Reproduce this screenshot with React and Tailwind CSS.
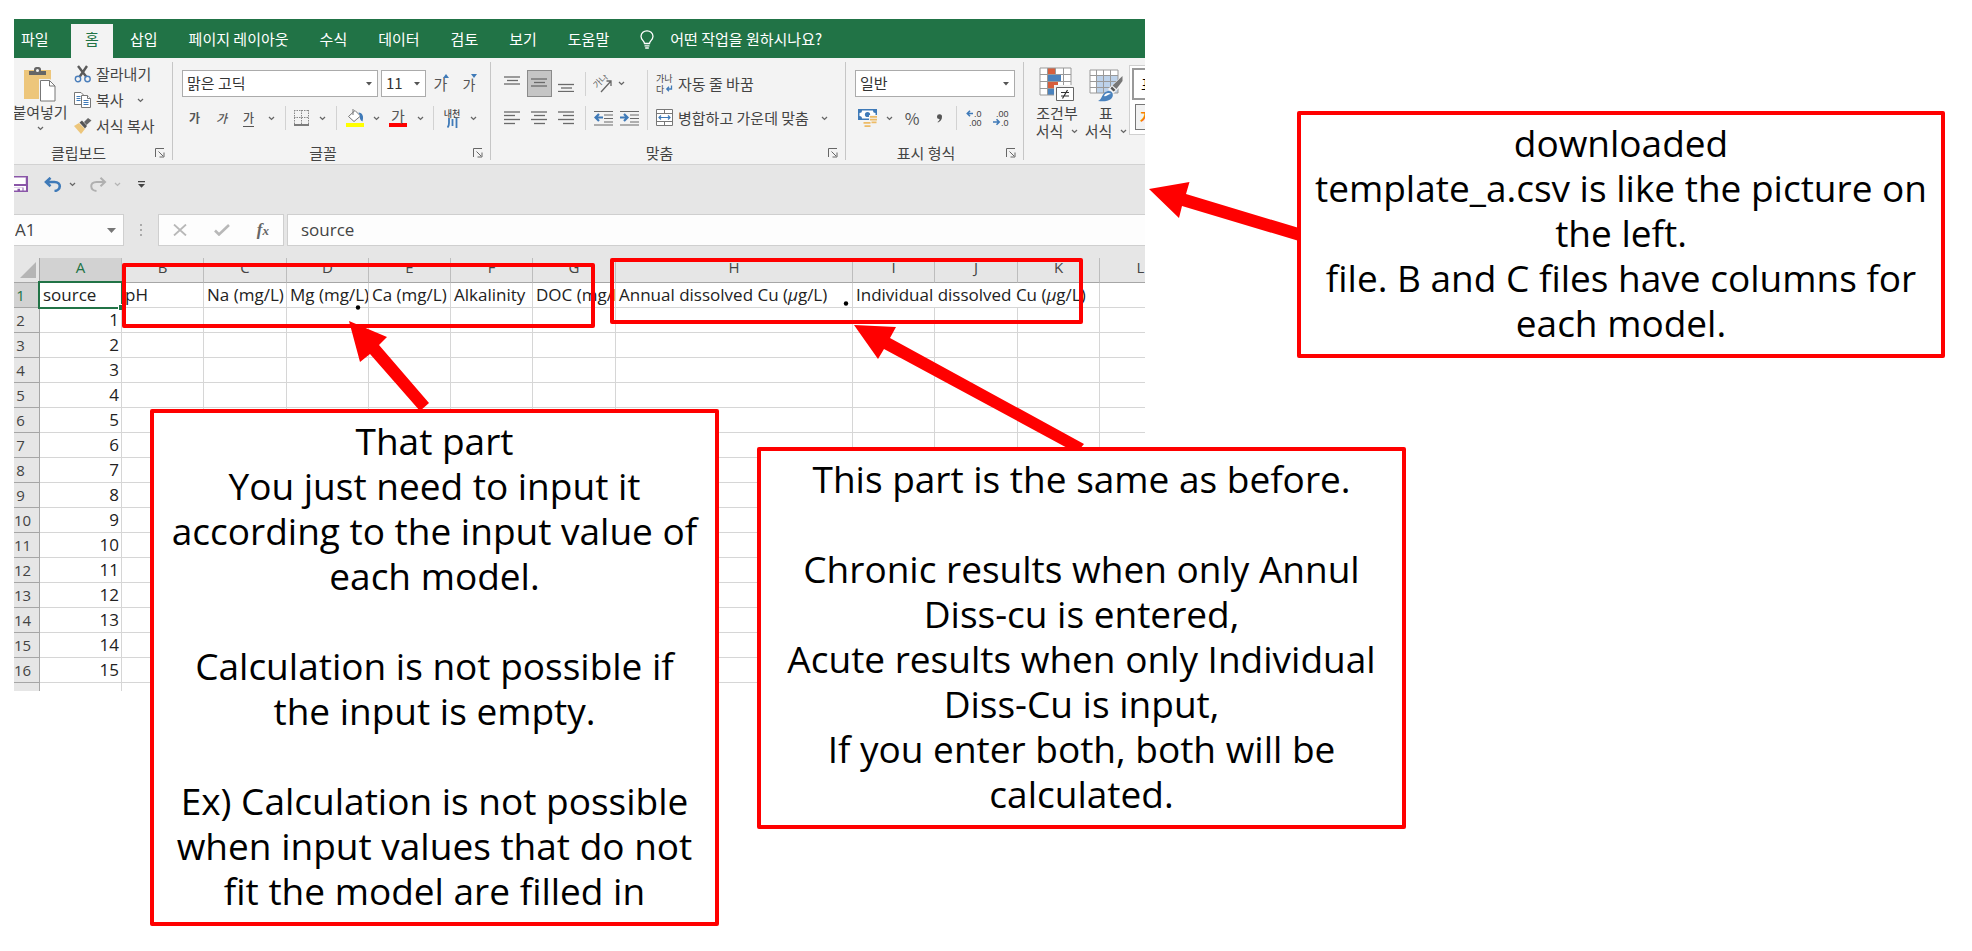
import React from "react";

const UI = "font-['Noto_Sans_CJK_KR','Noto_Sans',sans-serif]";
const LATIN = "font-['Open_Sans','Noto_Sans_CJK_KR',sans-serif]";

/* ---------- small pieces ---------- */

function Chevron({ color = "#666" }) {
  return (
    <svg width="7" height="5" viewBox="0 0 7 5" fill="none" stroke={color} strokeWidth="1.3" aria-hidden="true">
      <path d="M1 1l2.5 2.4L6 1" />
    </svg>
  );
}

function IconButton({ label, width, children, className = "" }) {
  return (
    <button type="button" aria-label={label} className={`flex h-6 shrink-0 items-center justify-center ${width} ${className}`}>
      {children}
    </button>
  );
}

function Divider() {
  return <span className="mx-[5px] h-6 w-px shrink-0 bg-[#d2d2d2]" />;
}

function Launcher({ label }) {
  return (
    <button type="button" aria-label={label} className="flex w-[17px] shrink-0 items-center">
      <svg width="10" height="10" viewBox="0 0 10 10" fill="none" stroke="#666" aria-hidden="true">
        <path d="M.5 9V.5H9M3.5 3.5L8 8M9 4.500V9H4.500" />
      </svg>
    </button>
  );
}

function Group({ title, className = "", children }) {
  return (
    <div className="flex shrink-0 items-stretch">
      <div className={`flex flex-col ${className}`}>
        <div className="h-[85px]">{children}</div>
        {title && (
          <div className="flex h-5 items-center">
            <span className="flex-1 text-center">{title}</span>
            <Launcher label={`${title} 설정`} />
          </div>
        )}
      </div>
      <span className="my-1 w-px bg-[#c6c6c6]" />
    </div>
  );
}

function Combo({ label, value, width }) {
  return (
    <div className={`flex h-[27px] shrink-0 items-center border border-[#ababab] bg-white pr-[5px] ${width}`}>
      <select aria-label={label} defaultValue={value} className="h-full min-w-0 flex-1 appearance-none bg-transparent pb-px pl-1 text-[#333] outline-none">
        <option>{value}</option>
      </select>
      <svg width="6" height="4" viewBox="0 0 6 4" fill="#555" className="pointer-events-none shrink-0" aria-hidden="true">
        <path d="M0 0h6L3 3.600z" />
      </svg>
    </div>
  );
}

function Lines({ rows }) {
  return (
    <svg width="17" height="16" viewBox="0 0 17 16" stroke="#6a6a6a" strokeWidth="1.3" aria-hidden="true">
      {rows.map(([x1, x2, y]) => (
        <path key={y} d={`M${x1} ${y}H${x2}`} />
      ))}
    </svg>
  );
}

/* ---------- ribbon ---------- */

const tabs = ["삽입", "페이지 레이아웃", "수식", "데이터", "검토", "보기", "도움말"];

function TabBar() {
  return (
    <nav className="flex h-[39px] items-end bg-[#217346] text-[15px] text-white">
      <button type="button" className="h-[34px] w-[57px] pb-[3px] pl-[7px] text-left">파일</button>
      <button type="button" className="h-[34px] w-[42px] bg-[#f3f3f3] pb-[3px] text-[#217346]">홈</button>
      <div className="flex gap-px pl-[2px]">
        {tabs.map((t) => (
          <button key={t} type="button" className="h-[34px] px-[15px] pb-[3px] whitespace-nowrap">{t}</button>
        ))}
      </div>
      <button type="button" className="flex h-[34px] items-center gap-4 pb-[3px] pl-[16px] whitespace-nowrap">
        <svg width="14" height="19" viewBox="0 0 14 19" fill="none" stroke="#fff" strokeWidth="1.3" aria-hidden="true">
          <path d="M4.500 13.500c0-2.500-3.500-3.500-3.500-7.200A5.900 5.900 0 0 1 7 .8a5.900 5.900 0 0 1 6 5.500c0 3.700-3.500 4.700-3.500 7.200zM4.500 15.800h5M5.200 18h3.600" />
        </svg>
        어떤 작업을 원하시나요?
      </button>
    </nav>
  );
}

function ClipboardGroup() {
  return (
    <Group title="클립보드" className="w-[170px]">
      <div className="flex">
        <button type="button" className="ml-3 flex w-[52px] shrink-0 flex-col items-center pt-[9px] whitespace-nowrap">
          <svg width="34" height="35" viewBox="0 0 34 35" aria-hidden="true">
            <rect x="1" y="3" width="27" height="29" fill="#edc67b" />
            <path d="M6 8V4h5V2.500A2.500 2.500 0 0 1 13.500 0h2A2.500 2.500 0 0 1 18 2.500V4h5v4z" fill="#666" />
            <circle cx="14.500" cy="3.500" r="1.500" fill="#f3f3f3" />
            <path d="M16 12h11l6 6v17H16z" fill="#f3f3f3" />
            <path d="M17.500 13.500h9l5.500 5.500v15H17.500z" fill="#fff" stroke="#777" />
            <path d="M26.500 13.500V19H32" fill="none" stroke="#777" />
          </svg>
          <span className="leading-5">붙여넣기</span>
          <span className="mt-1"><Chevron /></span>
        </button>
        <div className="flex flex-col pt-[3px] pl-2">
          <button type="button" className="flex h-[26px] items-center gap-1 whitespace-nowrap">
            <svg width="18" height="18" viewBox="0 0 18 18" fill="none" aria-hidden="true">
              <path d="M4 1l8.500 11M13 1L5.500 12" stroke="#5a5a5a" strokeWidth="2.400" />
              <circle cx="4" cy="14" r="2.700" stroke="#4a7ebb" strokeWidth="1.400" />
              <circle cx="13.500" cy="14" r="2.700" stroke="#4a7ebb" strokeWidth="1.400" />
            </svg>
            잘라내기
          </button>
          <button type="button" className="flex h-[26px] items-center gap-1 whitespace-nowrap">
            <svg width="18" height="16" viewBox="0 0 18 16" fill="#fff" stroke="#777" aria-hidden="true">
              <path d="M.5.500H7L10 3.500v9H.5z" />
              <path d="M2.500 4.500h4M2.500 6.500h4M2.500 8.500h4" stroke="#3f7ab8" />
              <path d="M7.500 3.500h6l3 3v9h-9z" />
              <path d="M13.500 3.500v3h3" />
              <path d="M9.500 8.500h5M9.500 10.500h5M9.500 12.500h5" stroke="#3f7ab8" />
            </svg>
            복사
            <span className="ml-[9px]"><Chevron /></span>
          </button>
          <button type="button" className="flex h-[26px] items-center gap-1 whitespace-nowrap">
            <svg width="18" height="17" viewBox="0 0 18 17" aria-hidden="true">
              <path d="M0 8l5-3 6 6-4 5z" fill="#edc67b" />
              <path d="M5.500 4.500L8 2.500 13 8l-2 2.500z" fill="#555" />
              <path d="M10 4l4-4 3.500 2.500L12.500 7z" fill="#666" />
            </svg>
            서식 복사
          </button>
        </div>
      </div>
    </Group>
  );
}

function FontGroup() {
  return (
    <Group title="글꼴" className="w-[317px]">
      <div className="flex flex-col gap-[9px] pt-3 pl-2">
        <div className="flex items-center pl-px">
          <Combo label="글꼴 이름" value="맑은 고딕" width="w-[196px]" />
          <span className="w-[3px]" />
          <Combo label="글꼴 크기" value="11" width="w-[45px]" />
          <IconButton label="글꼴 크게" width="w-[31px]">
            <span className="flex items-end text-[15px] leading-6 text-[#555]">
              가
              <svg width="6" height="4" viewBox="0 0 6 4" fill="#3f7ab8" className="-ml-1 mb-[18px]" aria-hidden="true"><path d="M0 4L3 0l3 4z" /></svg>
            </span>
          </IconButton>
          <IconButton label="글꼴 작게" width="w-[26px]">
            <span className="flex items-end text-sm leading-6 text-[#555]">
              가
              <svg width="6" height="4" viewBox="0 0 6 4" fill="#3f7ab8" className="-ml-1 mb-[18px]" aria-hidden="true"><path d="M0 0h6L3 4z" /></svg>
            </span>
          </IconButton>
        </div>
        <div className="flex items-center text-[#555]">
          <IconButton label="굵게" width="w-[27px]" className="text-xs font-bold">가</IconButton>
          <IconButton label="기울임꼴" width="w-[27px]" className="text-xs font-medium italic">가</IconButton>
          <IconButton label="밑줄" width="w-[27px]">
            <span className="border-b border-[#555] text-xs leading-4 font-medium">가</span>
          </IconButton>
          <IconButton label="밑줄 옵션" width="w-[18px]"><Chevron /></IconButton>
          <Divider />
          <IconButton label="테두리" width="w-[22px]">
            <svg width="16" height="16" viewBox="0 0 16 16" fill="none" stroke="#888" aria-hidden="true">
              <path d="M.5 0v14M14.500 0v14M7.500 0v14M0 .5h15M0 7.500h15" strokeDasharray="1.500 1" />
              <path d="M0 15h15" stroke="#555" strokeWidth="1.500" />
            </svg>
          </IconButton>
          <IconButton label="테두리 옵션" width="w-[18px]"><Chevron /></IconButton>
          <Divider />
          <IconButton label="채우기 색" width="w-[26px]">
            <svg width="18" height="18" viewBox="0 0 18 18" fill="none" aria-hidden="true">
              <path d="M2.500 7.500L9 1.500l5.500 5.500L8 12.500z" fill="#fff" stroke="#777" />
              <path d="M7 0v6" stroke="#777" />
              <path d="M12.500 3.500c4 .5 5.500 3.500 4 9-2.500-1-3-3.500-2.500-6z" fill="#3f7ab8" />
              <rect y="14" width="18" height="4" fill="#ff0" />
            </svg>
          </IconButton>
          <IconButton label="채우기 색 옵션" width="w-[16px]"><Chevron /></IconButton>
          <IconButton label="글꼴 색" width="w-[28px]">
            <span className="border-b-4 border-[#f00] px-[2px] text-[15px] leading-[14px]">가</span>
          </IconButton>
          <IconButton label="글꼴 색 옵션" width="w-[16px]"><Chevron /></IconButton>
          <Divider />
          <IconButton label="윗주 필드" width="w-[26px]">
            <span className="flex flex-col items-center text-[9px] leading-[9px] font-medium text-[#444]">
              내천
              <svg width="11" height="10" viewBox="0 0 11 10" fill="none" stroke="#3f7ab8" strokeWidth="1.800" aria-hidden="true">
                <path d="M2 0v5q0 3-1.500 4.500M5.500 1v7M9.500 0v10" />
              </svg>
            </span>
          </IconButton>
          <IconButton label="윗주 옵션" width="w-[16px]"><Chevron /></IconButton>
        </div>
      </div>
    </Group>
  );
}

function AlignGroup() {
  return (
    <Group title="맞춤" className="w-[354px]">
      <div className="flex pt-3 pl-2">
        <div className="flex w-[148px] flex-col gap-[9px]">
          <div className="flex h-[27px] items-center">
            <IconButton label="위쪽 맞춤" width="w-[27px]"><Lines rows={[[0, 16, 1], [3, 14, 4.500], [0, 16, 8]]} /></IconButton>
            <button type="button" aria-label="가운데 맞춤" aria-pressed="true" className="mx-px flex h-[27px] w-[25px] items-center justify-center border border-[#8a8a8a] bg-[#c5c5c5]">
              <Lines rows={[[0, 16, 3], [3, 14, 6.500], [0, 16, 10]]} />
            </button>
            <IconButton label="아래쪽 맞춤" width="w-[27px]"><Lines rows={[[0, 16, 8.500], [3, 14, 12], [0, 16, 15.500]]} /></IconButton>
            <Divider />
            <IconButton label="방향" width="w-[24px]">
              <svg width="20" height="18" viewBox="0 0 20 18" fill="none" stroke="#666" aria-hidden="true">
                <text x="0" y="0" transform="translate(4 14) rotate(-45)" fontSize="9" fill="#666" stroke="none">가나</text>
                <path d="M8 17L18 6M13.500 6H18v5" strokeWidth="1.300" />
              </svg>
            </IconButton>
            <IconButton label="방향 옵션" width="w-[12px]"><Chevron /></IconButton>
          </div>
          <div className="flex items-center">
            <IconButton label="왼쪽 맞춤" width="w-[27px]"><Lines rows={[[0, 16, 2], [0, 11, 5.500], [0, 16, 9.500], [0, 11, 13.500]]} /></IconButton>
            <IconButton label="가운데" width="w-[27px]"><Lines rows={[[0, 16, 2], [3, 14, 5.500], [0, 16, 9.500], [3, 14, 13.500]]} /></IconButton>
            <IconButton label="오른쪽 맞춤" width="w-[27px]"><Lines rows={[[0, 16, 2], [5, 16, 5.500], [0, 16, 9.500], [5, 16, 13.500]]} /></IconButton>
            <Divider />
            <IconButton label="내어쓰기" width="w-[24px]">
              <svg width="19" height="16" viewBox="0 0 19 16" fill="none" stroke="#6a6a6a" strokeWidth="1.200" aria-hidden="true">
                <path d="M0 1.500h19M10 5h9M10 8.500h9M10 12h9M0 15h19" />
                <path d="M9 7.500H2M5 4L1.500 7.500 5 11" stroke="#3f7ab8" strokeWidth="2.200" />
              </svg>
            </IconButton>
            <IconButton label="들여쓰기" width="w-[28px]">
              <svg width="19" height="16" viewBox="0 0 19 16" fill="none" stroke="#6a6a6a" strokeWidth="1.200" aria-hidden="true">
                <path d="M0 1.500h19M10 5h9M10 8.500h9M10 12h9M0 15h19" />
                <path d="M0 7.500h7M4 4l3.500 3.500L4 11" stroke="#3f7ab8" strokeWidth="2.200" />
              </svg>
            </IconButton>
          </div>
        </div>
        <span className="w-px bg-[#d2d2d2]" />
        <div className="flex flex-col gap-[9px] pl-2">
          <button type="button" className="flex h-[27px] items-center gap-1 whitespace-nowrap">
            <svg width="18" height="20" viewBox="0 0 18 20" fill="none" aria-hidden="true">
              <text x="0" y="8" fontSize="9" fill="#444">가나</text>
              <text x="0" y="18.500" fontSize="9" fill="#444">다</text>
              <path d="M15.500 11.500V15H11M13 12.800L10.800 15l2.200 2.200" stroke="#3f7ab8" strokeWidth="1.300" />
            </svg>
            자동 줄 바꿈
          </button>
          <button type="button" className="flex h-6 items-center gap-1 whitespace-nowrap">
            <svg width="18" height="18" viewBox="0 0 18 18" fill="#fff" stroke="#777" aria-hidden="true">
              <path d="M.5.500h16v16H.5zM.5 4.500h16M.5 12.500h16M8.500.500v4M8.500 12.500v4" />
              <path d="M3 8.500h11M5 6.500l-2 2 2 2M12 6.500l2 2-2 2" fill="none" stroke="#3f7ab8" strokeWidth="1.200" />
            </svg>
            병합하고 가운데 맞춤
            <span className="ml-2"><Chevron /></span>
          </button>
        </div>
      </div>
    </Group>
  );
}

function NumberGroup() {
  return (
    <Group title="표시 형식" className="w-[177px]">
      <div className="flex flex-col gap-[9px] pt-3 pl-[9px]">
        <Combo label="표시 형식 선택" value="일반" width="w-[160px]" />
        <div className="flex items-center text-[#555]">
          <IconButton label="회계 표시 형식" width="w-[26px]">
            <svg width="20" height="19" viewBox="0 0 20 19" aria-hidden="true">
              <path d="M0 0h19v11H0z" fill="#3f7ab8" />
              <path d="M1.500 4A2.500 2.500 0 0 0 4 1.500h11A2.500 2.500 0 0 0 17.500 4v3A2.500 2.500 0 0 0 15 9.500H4A2.500 2.500 0 0 0 1.500 7z" fill="#fff" />
              <circle cx="9.500" cy="5.500" r="2.600" fill="#3f7ab8" />
              <path d="M11 6h9v9h-6v4H4v-7h7z" fill="#f3f3f3" />
              <path d="M12 7h7v1.800h-7zM12 9.800h7v1.800h-7zM5.500 13h7v1.800h-7zM13.500 12.600h5v1.600h-5zM6.500 16.200h6V18h-6z" fill="#edbb66" />
            </svg>
          </IconButton>
          <IconButton label="회계 옵션" width="w-[16px]"><Chevron /></IconButton>
          <IconButton label="백분율" width="w-[30px]" className="text-base">%</IconButton>
          <IconButton label="쉼표 스타일" width="w-[24px]">
            <svg width="7" height="9" viewBox="0 0 7 9" fill="#555" aria-hidden="true"><path d="M1 2.500a2.500 2.500 0 0 1 5 .3C6 5.500 4.500 7.500 2 8.500L1.500 8C3 7 3.600 6 3.500 5A2.400 2.400 0 0 1 1 2.500z" /></svg>
          </IconButton>
          <Divider />
          <IconButton label="자릿수 늘림" width="w-[26px]">
            <svg width="18" height="18" viewBox="0 0 18 18" fill="none" className="font-['Liberation_Sans',sans-serif]" aria-hidden="true">
              <text x="8" y="8" fontSize="9" fill="#444">.0</text>
              <text x="3" y="17" fontSize="9" fill="#444">.00</text>
              <path d="M7 4.500H1.500M4 1.800L1.300 4.500 4 7.200" stroke="#3f7ab8" strokeWidth="1.600" />
            </svg>
          </IconButton>
          <IconButton label="자릿수 줄임" width="w-[28px]">
            <svg width="18" height="18" viewBox="0 0 18 18" fill="none" className="font-['Liberation_Sans',sans-serif]" aria-hidden="true">
              <text x="3" y="8" fontSize="9" fill="#444">.00</text>
              <text x="8" y="17" fontSize="9" fill="#444">.0</text>
              <path d="M0 13h6M3.500 10.300L6.200 13l-2.700 2.700" stroke="#3f7ab8" strokeWidth="1.600" />
            </svg>
          </IconButton>
        </div>
      </div>
    </Group>
  );
}

function StylesGroup() {
  return (
    <div className="flex shrink-0 pl-[7px]">
      <button type="button" className="flex w-[52px] flex-col items-center pt-[9px] leading-[18px] whitespace-nowrap">
        <svg width="36" height="35" viewBox="0 0 36 35" aria-hidden="true">
          <path d="M1 1h31v27H1z" fill="#fff" />
          <path d="M9 1h8v6H9zM9 15h10v6H9z" fill="#d65f3d" />
          <path d="M9 8h13v6H9zM9 22h6v6H9z" fill="#4a82bd" />
          <path d="M1 1h31v27H1zM8.500 1v27M24.500 1v27M1 7.500h31M1 14.500h31M1 21.500h31M16.500 1v6.500" fill="none" stroke="#999" />
          <path d="M15 18h21v17H15z" fill="#f3f3f3" />
          <path d="M17.500 20.500h17v13h-17z" fill="#fff" stroke="#666" />
          <path d="M22 25.500h8M22 29h8M28.500 23l-5 8.500" stroke="#333" strokeWidth="1.200" />
        </svg>
        <span className="mt-[2px]">조건부</span>
        <span className="flex items-center gap-2">서식<Chevron /></span>
      </button>
      <button type="button" className="flex w-[46px] flex-col items-center pt-[9px] leading-[18px] whitespace-nowrap">
        <svg width="34" height="35" viewBox="0 0 34 35" aria-hidden="true">
          <path d="M1 3h28v23H1z" fill="#fff" />
          <path d="M8 9h21v17H8z" fill="#bdd2ea" />
          <path d="M1 3h28v23H1zM7.500 3v23M14.500 3v23M21.500 3v23M1 8.500h28M1 14.500h28M1 20.500h28" fill="none" stroke="#999" />
          <path d="M34 8v9L24 27l-5-5z" fill="#f3f3f3" />
          <path d="M33.500 9v5l-6 8-4-3.500z" fill="#777" />
          <path d="M23 19.500l3.500 3.500-2 1.500-3-3z" fill="#555" />
          <path d="M9 34c4-1 4-9 10-10 5-.5 6.500 5 3 8-3 2.500-8 2.500-13 2z" fill="#4a82bd" />
          <path d="M15 29c1-3 5-4 7-2-3 0-4 3-7 2z" fill="#fff" />
        </svg>
        <span className="mt-[2px]">표</span>
        <span className="flex items-center gap-2">서식<Chevron /></span>
      </button>
      <div className="mt-[7px] flex h-[70px] w-[90px] shrink-0 flex-col gap-1 border border-[#d0d0d0] bg-white p-[2px]">
        <button type="button" className="h-8 w-full border-2 border-[#999] pl-[7px] text-left text-black">표준</button>
        <button type="button" className="ml-[3px] h-[26px] border border-[#777] bg-[#f2f2f2] pl-1 text-left font-bold text-[#fa7d00]">계산</button>
      </div>
    </div>
  );
}

function Ribbon() {
  return (
    <div className="flex h-[107px] overflow-hidden border-b border-[#d2d2d2] bg-[#f3f3f3] text-[15px] leading-5 text-[#444]">
      <div className="-ml-3 flex">
        <ClipboardGroup />
        <FontGroup />
        <AlignGroup />
        <NumberGroup />
        <StylesGroup />
      </div>
    </div>
  );
}

function QuickAccess() {
  return (
    <div className="flex h-[38px] items-center">
      <button type="button" aria-label="저장" className="flex w-[30px]">
        <svg width="14" height="16" viewBox="0 0 14 16" fill="none" aria-hidden="true">
          <path d="M0 0h14v16H0z" fill="#8a56a8" />
          <path d="M0 1.500h12v6.500H0zM0 10h12v4.500H9.500V11.500H0z" fill="#fff" />
          <path d="M0 11.500h8.500v3H6V12.800H3.500v1.700H0z" fill="#fff" />
          <path d="M11 1.500h1V8h-1z" fill="#8a56a8" opacity=".25" />
        </svg>
      </button>
      <button type="button" aria-label="실행 취소" className="flex w-[22px]">
        <svg width="18" height="15" viewBox="0 0 18 15" fill="none" stroke="#3f7ab8" strokeWidth="2.600" aria-hidden="true">
          <path d="M6.500.800L2 5l4.500 4.200M2 5h8.500c7.500 0 6.500 8.500 0 9" />
        </svg>
      </button>
      <span className="w-[23px] pl-[3px]"><Chevron /></span>
      <button type="button" aria-label="다시 실행" className="flex w-[22px]">
        <svg width="18" height="15" viewBox="0 0 18 15" fill="none" stroke="#b0b0b0" strokeWidth="2" aria-hidden="true">
          <path d="M11.500.800L16 5l-4.500 4.200M16 5H7.500C0 5 1 13.500 7.500 14" />
        </svg>
      </button>
      <span className="w-[27px] pl-[3px]"><Chevron color="#b5b5b5" /></span>
      <button type="button" aria-label="빠른 실행 도구 모음 사용자 지정">
        <svg width="7" height="7" viewBox="0 0 7 7" fill="#444" aria-hidden="true"><path d="M0 0h7v1.200H0zM0 3h7L3.500 6.800z" /></svg>
      </button>
    </div>
  );
}

function FormulaBar() {
  return (
    <div className={`flex h-8 text-[17px] text-[#444] ${LATIN}`}>
      <div className="flex w-[110px] shrink-0 items-center border-y border-r border-[#cfcfcf] bg-[#fdfdfd] pr-[7px]">
        <input aria-label="이름 상자" defaultValue="A1" className="min-w-0 flex-1 bg-transparent pl-px outline-none" />
        <svg width="9" height="5" viewBox="0 0 9 5" fill="#777" aria-hidden="true"><path d="M0 0h9L4.500 5z" /></svg>
      </div>
      <div className="flex w-[34px] shrink-0 items-center justify-center">
        <svg width="3" height="12" viewBox="0 0 3 12" fill="#aaa" aria-hidden="true"><path d="M0 0h2v2H0zM0 5h2v2H0zM0 10h2v2H0z" /></svg>
      </div>
      <div className="flex w-[126px] shrink-0 items-center justify-between border border-[#cfcfcf] bg-[#fdfdfd] px-[14px]">
        <button type="button" aria-label="취소">
          <svg width="14" height="12" viewBox="0 0 14 12" stroke="#b8b8b8" strokeWidth="1.800" aria-hidden="true"><path d="M1 .5l12 11M13 .5l-12 11" /></svg>
        </button>
        <button type="button" aria-label="입력">
          <svg width="16" height="12" viewBox="0 0 16 12" fill="none" stroke="#b8b8b8" strokeWidth="2.600" aria-hidden="true"><path d="M1 6.500l4 4L15 1" /></svg>
        </button>
        <button type="button" aria-label="함수 삽입" className="font-['Liberation_Serif',serif] text-[17px] leading-5 font-bold text-[#666] italic">
          f<span className="text-[13px]">x</span>
        </button>
      </div>
      <input aria-label="수식 입력줄" defaultValue="source" className="ml-[3px] min-w-0 flex-1 border border-r-0 border-[#cfcfcf] bg-[#fdfdfd] pl-[13px] outline-none" />
    </div>
  );
}

/* ---------- sheet ---------- */

const columns = [
  ["A", "w-[82px]"], ["B", "w-[82px]"], ["C", "w-[83px]"], ["D", "w-[82px]"],
  ["E", "w-[82px]"], ["F", "w-[82px]"], ["G", "w-[83px]"], ["H", "w-[237px]"],
  ["I", "w-[82px]"], ["J", "w-[83px]"], ["K", "w-[82px]"], ["L", "w-[82px]"],
];
const fields = ["pH", "Na (mg/L)", "Mg (mg/L)", "Ca (mg/L)", "Alkalinity", "DOC (mg/L)"];
const CELL = "h-[25px] overflow-hidden border-r border-b border-[#d6d6d6] p-0 whitespace-nowrap";
const HEAD = "h-[25px] border-r border-b border-r-[#a6a6a6] border-b-[#a6a6a6] p-0 pr-3 text-[15px] font-normal";

function Sheet() {
  const values = Array.from({ length: 15 }, (_, i) => i + 1);
  return (
    <table className={`w-[1168px] table-fixed border-separate border-spacing-0 bg-white text-[17px] leading-5 text-[#222] ${LATIN}`}>
      <colgroup>
        <col className="w-[26px]" />
        {columns.map(([c, w]) => <col key={c} className={w} />)}
      </colgroup>
      <thead>
        <tr className="bg-[#e6e6e6] text-[15px] text-[#444]">
          <th className="h-[25px] border-r border-b border-[#a6a6a6] p-0">
            <svg width="16" height="16" viewBox="0 0 16 16" fill="#b5b5b5" className="ml-[6px]" aria-hidden="true"><path d="M16 0v16H0z" /></svg>
          </th>
          {columns.map(([c]) => (
            <th key={c} scope="col" className={`h-[25px] border-r border-b border-r-[#bdbdbd] border-b-[#a6a6a6] p-0 pb-[6px] leading-[18px] font-normal ${c === "A" ? "bg-[#d2d2d2] text-[#217346]" : ""}`}>{c}</th>
          ))}
        </tr>
      </thead>
      <tbody>
        <tr>
          <th scope="row" className={`${HEAD} bg-[#d2d2d2] text-[#217346]`}>1</th>
          <td className="relative h-[25px] border-r border-b border-[#d6d6d6] p-0 pl-[3px]">
            source
            <span className="absolute -inset-[2px] border-2 border-[#217346]" />
            <span className="absolute -right-[3px] -bottom-[3px] size-[6px] border-t border-l border-white bg-[#217346]" />
          </td>
          {fields.map((f) => <td key={f} className={`${CELL} pl-[3px]`}>{f}</td>)}
          <td className={`${CELL} pl-[3px]`}>Annual dissolved Cu (<i>µ</i>g/L)</td>
          <td colSpan={3} className={`${CELL} pl-[3px]`}>Individual dissolved Cu (<i>µ</i>g/L)</td>
          <td className={CELL} />
        </tr>
        {values.map((v) => (
          <tr key={v}>
            <th scope="row" className={`${HEAD} bg-[#e6e6e6] text-[#444]`}>{v + 1}</th>
            <td className={`${CELL} pr-[2px] text-right`}>{v}</td>
            {columns.slice(1).map(([c]) => <td key={c} className={CELL} />)}
          </tr>
        ))}
        <tr aria-hidden="true">
          <td className="h-2 border-r border-[#a6a6a6] bg-[#e6e6e6] p-0" />
          {columns.map(([c]) => <td key={c} className="h-2 border-r border-[#d6d6d6] p-0" />)}
        </tr>
      </tbody>
    </table>
  );
}

/* ---------- notes ---------- */

function Note({ lines, className }) {
  return (
    <div className={`rounded-[2px] border-4 border-[#f00] bg-white pt-[5px] pb-[9px] text-center text-[37px] leading-[45px] whitespace-nowrap text-black ${LATIN} ${className}`}>
      {lines.map((l, i) => <p key={i}>{l || "\u00a0"}</p>)}
    </div>
  );
}

function Arrows() {
  return (
    <svg width="1972" height="951" viewBox="0 0 1972 951" fill="#f00" className="pointer-events-none absolute top-0 left-0" aria-hidden="true">
      <path d="M349 321l38 16-8 8 50 58-9 8-50-57-10 8z" />
      <path d="M854 325l42 2-6 11 194 106-5 6h-8L884 349l-6 10z" />
      <path d="M1149 189l40.500-7-3.500 12 113 34v13l-117-35-3 12z" />
      <circle cx="358" cy="307.500" r="2.200" fill="#000" />
      <circle cx="846" cy="303.500" r="2.200" fill="#000" />
    </svg>
  );
}

export default function App() {
  return (
    <main className={`relative flex min-h-screen items-start gap-[152px] overflow-hidden bg-white pt-[19px] pr-[27px] pl-[14px] ${UI}`}>
      <section aria-label="template_a.csv" className="min-w-0 flex-1 overflow-hidden bg-[#e6e6e6]">
        <TabBar />
        <Ribbon />
        <QuickAccess />
        <div className="pt-[11px] pb-3"><FormulaBar /></div>
        <Sheet />
      </section>

      <Arrows />
      <div className="absolute top-[263px] left-[122px] h-[65px] w-[473px] rounded-[2px] border-4 border-[#f00]" />
      <div className="absolute top-[258px] left-[610px] h-[66px] w-[473px] rounded-[2px] border-4 border-[#f00]" />

      <aside className="mt-[92px] w-[648px] shrink-0">
        <Note
          className="relative"
          lines={["downloaded", "template_a.csv is like the picture on", "the left.", "file. B and C files have columns for", "each model."]}
        />
      </aside>

      <Note
        className="absolute top-[409px] left-[150px] w-[569px]"
        lines={["That part", "You just need to input it", "according to the input value of", "each model.", "", "Calculation is not possible if", "the input is empty.", "", "Ex) Calculation is not possible", "when input values that do not", "fit the model are filled in"]}
      />
      <Note
        className="absolute top-[447px] left-[757px] w-[649px]"
        lines={["This part is the same as before.", "", "Chronic results when only Annul", "Diss-cu is entered,", "Acute results when only Individual", "Diss-Cu is input,", "If you enter both, both will be", "calculated."]}
      />
    </main>
  );
}
